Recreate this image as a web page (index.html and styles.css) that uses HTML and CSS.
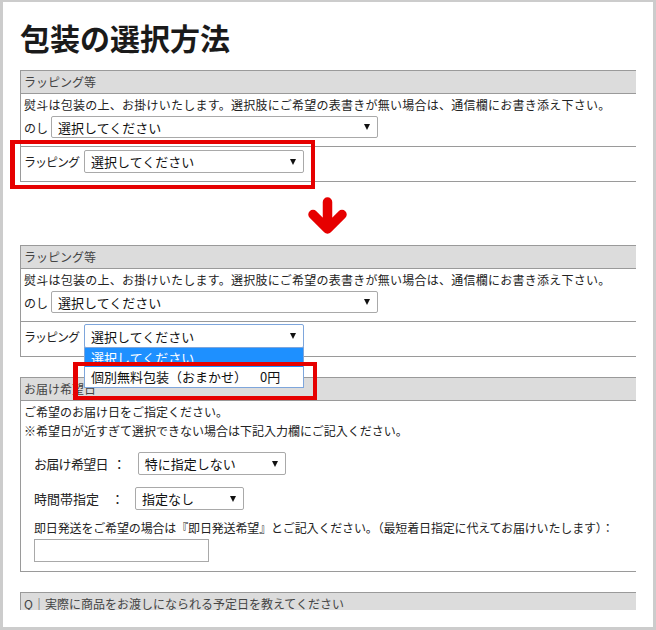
FILE: index.html
```html
<!DOCTYPE html>
<html lang="ja">
<head>
<meta charset="utf-8">
<title>包装の選択方法</title>
<link rel="stylesheet" href="styles.css">
</head>
<body>
<div class="frame">
  <div class="page">
    <h1 class="title">包装の選択方法</h1>

    <section class="sec">
      <div class="sec-head">ラッピング等</div>
      <div class="row row-noshi">
        <p class="note">熨斗は包装の上、お掛けいたします。選択肢にご希望の表書きが無い場合は、通信欄にお書き添え下さい。</p>
        <div class="field">
          <span class="lbl">のし</span>
          <div class="sel sel-noshi"><span>選択してください</span><i class="caret"></i></div>
        </div>
      </div>
      <div class="row row-wrap">
        <div class="field">
          <span class="lbl lbl-wrap">ラッピング</span>
          <div class="sel sel-wrap"><span>選択してください</span><i class="caret"></i></div>
        </div>
      </div>
    </section>

    <div class="arrow-wrap">
      <svg class="arrow" width="40" height="40" viewBox="0 0 40 40">
        <path d="M19.5 5 L19.5 31 M5 17.5 L19.5 32 L34 17.5" fill="none" stroke="#e60000" stroke-width="9.5" stroke-linecap="round" stroke-linejoin="round"/>
      </svg>
    </div>

    <section class="sec">
      <div class="sec-head">ラッピング等</div>
      <div class="row row-noshi">
        <p class="note">熨斗は包装の上、お掛けいたします。選択肢にご希望の表書きが無い場合は、通信欄にお書き添え下さい。</p>
        <div class="field">
          <span class="lbl">のし</span>
          <div class="sel sel-noshi"><span>選択してください</span><i class="caret"></i></div>
        </div>
      </div>
      <div class="row row-wrap row-open">
        <div class="field">
          <span class="lbl lbl-wrap">ラッピング</span>
          <div class="sel sel-wrap sel-focus"><span>選択してください</span><i class="caret"></i>
            <ul class="dropdown">
              <li class="opt opt-active">選択してください</li>
              <li class="opt">個別無料包装（おまかせ）<span class="price">0円</span></li>
            </ul>
          </div>
        </div>
      </div>
    </section>

    <section class="sec sec-delivery">
      <div class="sec-head">お届け希望日</div>
      <div class="sec-body">
        <p class="dnote">ご希望のお届け日をご指定ください。</p>
        <p class="dnote">※希望日が近すぎて選択できない場合は下記入力欄にご記入ください。</p>
        <div class="drow">
          <span class="dlbl dlbl-1">お届け希望日</span><span class="colon colon-1">：</span>
          <div class="sel sel-date"><span>特に指定しない</span><i class="caret"></i></div>
        </div>
        <div class="drow">
          <span class="dlbl">時間帯指定</span><span class="colon colon-2">：</span>
          <div class="sel sel-time"><span>指定なし</span><i class="caret"></i></div>
        </div>
        <p class="dtext">即日発送をご希望の場合は『即日発送希望』とご記入ください。（最短着日指定に代えてお届けいたします）：</p>
        <div class="dinput"></div>
      </div>
    </section>

    <section class="sec sec-q">
      <div class="sec-head">Q｜実際に商品をお渡しになられる予定日を教えてください</div>
    </section>

    <div class="mark mark-1"></div>
    <div class="mark mark-2"></div>
  </div>
</div>
</body>
</html>
```

FILE: styles.css
```css
* { box-sizing: border-box; }

html, body {
  margin: 0;
  padding: 0;
  background: #fff;
}

body {
  font-family: "Noto Sans CJK JP", "Noto Sans", sans-serif;
  color: #333;
}

.frame {
  width: 656px;
  height: 630px;
  border: 3px solid #cccccc;
  border-top-width: 2px;
  background: #fff;
}

.page {
  position: relative;
  height: 608px;
  overflow: hidden;
  padding: 0 17px;
}

.title {
  margin: 17px 0 15px;
  font-size: 30px;
  line-height: 36px;
  font-weight: bold;
  color: #1a1a1a;
  letter-spacing: 0;
}

.sec {
  border-left: 1px solid #9a9a9a;
}

.sec-head {
  height: 24px;
  border-top: 1px solid #9a9a9a;
  border-bottom: 1px solid #9a9a9a;
  background: #dcdcdc;
  font-size: 12px;
  line-height: 22px;
  padding-left: 3px;
  color: #444;
  white-space: nowrap;
}

.row {
  border-bottom: 1px solid #9a9a9a;
  padding-left: 3px;
}

.row-noshi {
  height: 53px;
  padding-top: 1px;
}

.row-wrap {
  height: 35px;
  padding-top: 3px;
}

.row-open {
  padding-top: 2px;
}

.note {
  margin: 0;
  font-size: 12px;
  line-height: 20px;
  letter-spacing: 0.25px;
  white-space: nowrap;
  color: #222;
}

.field {
  display: flex;
  align-items: center;
  margin-top: 1px;
}

.row-wrap .field { margin-top: 0; }

.lbl {
  font-size: 12px;
  color: #222;
  margin-right: 3px;
}

.lbl-wrap {
  letter-spacing: -1px;
  margin-right: 5px;
}

.sel {
  position: relative;
  display: flex;
  align-items: center;
  justify-content: space-between;
  border: 1px solid #a9a9a9;
  border-radius: 2px;
  background: #fff;
  font-size: 13px;
  color: #111;
  padding: 0 7px 0 6px;
  white-space: nowrap;
}

.caret {
  display: block;
  width: 0;
  height: 0;
  border-left: 3.5px solid transparent;
  border-right: 3.5px solid transparent;
  border-top: 6px solid #111;
}

.sel-noshi { width: 327px; height: 22px; }
.sel-wrap { width: 220px; height: 23px; }
.sel-focus { height: 24px; border-color: #7ea6dc; }

.dropdown {
  position: absolute;
  left: -1px;
  top: 100%;
  width: 220px;
  margin: 0;
  padding: 0;
  list-style: none;
  border: 1px solid #7ea6dc;
  background: #fff;
  z-index: 2;
}

.opt {
  height: 20px;
  line-height: 20px;
  padding-left: 6px;
  font-size: 13px;
  color: #111;
}

.price {
  margin-left: 13px;
}

.opt-active {
  height: 19px;
  line-height: 19px;
  background: #1e90ff;
  color: #fff;
}

.arrow-wrap {
  height: 63px;
  padding-top: 15px;
  display: flex;
  justify-content: center;
}

.arrow { display: block; }

.sec-delivery,
.sec-q {
  margin-top: 20px;
}

.sec-body {
  border-bottom: 1px solid #9a9a9a;
  padding: 1px 3px 9px;
}

.dnote {
  margin: 0;
  font-size: 12px;
  line-height: 19px;
  color: #222;
  white-space: nowrap;
}

.drow {
  display: flex;
  align-items: center;
  margin: 12px 0 0 10px;
  font-size: 13px;
  color: #222;
}

.dlbl-1 { letter-spacing: -0.7px; }

.colon-1 { margin-left: 5px; margin-right: 12px; }
.colon-2 { margin-left: 12px; margin-right: 11px; }

.sel-date { width: 148px; height: 23px; }
.sel-time { width: 109px; height: 23px; }

.dtext {
  margin: 9px 0 0 10px;
  font-size: 12px;
  line-height: 18px;
  color: #222;
  white-space: nowrap;
  letter-spacing: -0.15px;
}

.dinput {
  margin: 2px 0 0 10px;
  width: 175px;
  height: 23px;
  border: 1px solid #a9a9a9;
  background: #fff;
}

.mark {
  position: absolute;
  border: 4px solid #e60000;
  z-index: 3;
}

.mark-1 {
  left: 7px;
  top: 138px;
  width: 305px;
  height: 49px;
  border-left-width: 5px;
}

.mark-2 {
  left: 70px;
  top: 360px;
  width: 244px;
  height: 38px;
  border-left-width: 5px;
}
```
